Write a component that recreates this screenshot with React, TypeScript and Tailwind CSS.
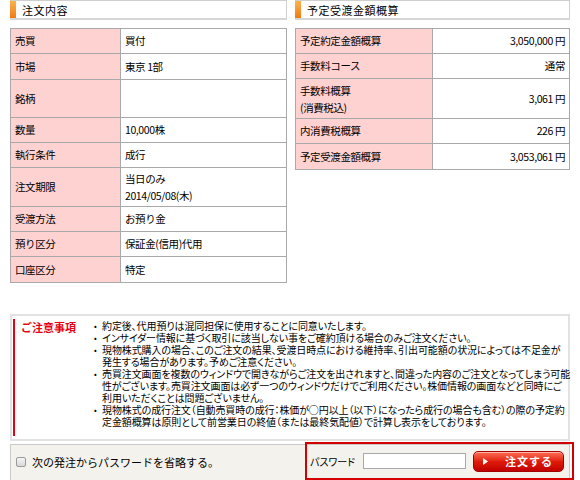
const labelTd = 'border border-[#a9a9a9] bg-[#ffd2d2] px-[4px] align-middle';
const valueTd = 'border border-[#a9a9a9] bg-white px-[4px] align-middle';

const SectionHeader = ({ title }: { title: string }) => (
  <div className="flex h-[20px] border border-l-0 border-[#cfcfcf] border-b-[2px] border-b-[#d6d6d6] bg-white">
    <div className="w-[6px] bg-gradient-to-b from-[#fbb24a] to-[#f07a0c]" />
    <div className="pl-[6px] text-[11px] leading-[18px] tracking-[0.5px]">{title}</div>
  </div>
);

const orderRows: { label: string; value: React.ReactNode; h: string }[] = [
  { label: '売買', value: '買付', h: 'h-[25px]' },
  { label: '市場', value: '東京 1部', h: 'h-[26px]' },
  { label: '銘柄', value: '', h: 'h-[38px]' },
  { label: '数量', value: '10,000株', h: 'h-[25px]' },
  { label: '執行条件', value: '成行', h: 'h-[25px]' },
  {
    label: '注文期限',
    value: (
      <div className="leading-[17px]">
        <div>当日のみ</div>
        <div>2014/05/08(木)</div>
      </div>
    ),
    h: 'h-[39px]',
  },
  { label: '受渡方法', value: 'お預り金', h: 'h-[25px]' },
  { label: '預り区分', value: '保証金(信用)代用', h: 'h-[25px]' },
  { label: '口座区分', value: '特定', h: 'h-[26px]' },
];

const estimateRows: { label: React.ReactNode; value: string; h: string }[] = [
  { label: '予定約定金額概算', value: '3,050,000 円', h: 'h-[25px]' },
  { label: '手数料コース', value: '通常', h: 'h-[25px]' },
  {
    label: (
      <div className="leading-[17px]">
        <div>手数料概算</div>
        <div>(消費税込)</div>
      </div>
    ),
    value: '3,061 円',
    h: 'h-[40px]',
  },
  { label: '内消費税概算', value: '226 円', h: 'h-[25px]' },
  { label: '予定受渡金額概算', value: '3,053,061 円', h: 'h-[26px]' },
];

const notes: string[][] = [
  ['約定後、代用預りは混同担保に使用することに同意いたします。'],
  ['インサイダー情報に基づく取引に該当しない事をご確約頂ける場合のみご注文ください。'],
  [
    '現物株式購入の場合、このご注文の結果、受渡日時点における維持率、引出可能額の状況によっては不足金が',
    '発生する場合があります。予めご注意ください。',
  ],
  [
    '売買注文画面を複数のウィンドウで開きながらご注文を出されますと、間違った内容のご注文となってしまう可能',
    '性がございます。売買注文画面は必ず一つのウィンドウだけでご利用ください。株価情報の画面などと同時にご',
    '利用いただくことは問題ございません。',
  ],
  [
    '現物株式の成行注文（自動売買時の成行：株価が○円以上（以下）になったら成行の場合も含む）の際の予定約',
    '定金額概算は原則として前営業日の終値（または最終気配値）で計算し表示をしております。',
  ],
];

const App = () => {
  return (
    <div className="w-[580px] h-[480px] overflow-hidden bg-white px-[10px] text-black font-['Noto_Sans_CJK_JP','Noto_Sans',sans-serif]">
      {/* Order summary + estimate */}
      <div className="flex items-start gap-[8px]">
        <div className="w-[277px]">
          <SectionHeader title="注文内容" />
          <table className="mt-[8px] w-full border-collapse text-[10.5px] tracking-[-0.4px]">
            <tbody>
              {orderRows.map((r) => (
                <tr key={r.label} className={r.h}>
                  <td className={`${labelTd} w-[110px]`}>{r.label}</td>
                  <td className={valueTd}>{r.value}</td>
                </tr>
              ))}
            </tbody>
          </table>
        </div>

        <div className="w-[275px]">
          <SectionHeader title="予定受渡金額概算" />
          <table className="mt-[8px] w-full border-collapse text-[10.5px] tracking-[-0.4px]">
            <tbody>
              {estimateRows.map((r, i) => (
                <tr key={i} className={r.h}>
                  <td className={`${labelTd} w-[137px]`}>{r.label}</td>
                  <td className={`${valueTd} text-right`}>{r.value}</td>
                </tr>
              ))}
            </tbody>
          </table>
        </div>
      </div>

      {/* Notice */}
      <div className="mt-[31px] h-[127px] border-[2px] border-[#e2e2e2] py-[3px] pl-[1px]">
        <div className="flex h-full border-l-[2px] border-[#e60012] pl-[6px] pt-[1px]">
          <div className="w-[72px] shrink-0 text-[11px] font-bold leading-[14px] text-[#e60012]">ご注意事項</div>
          <div className="text-[10px] leading-[12px] tracking-[-0.1px] [font-feature-settings:'palt']">
            {notes.map((lines, i) => (
              <div key={i} className="flex">
                <span className="w-[9px] shrink-0 pl-[1px] text-[8px]">•</span>
                <div>
                  {lines.map((l) => (
                    <div key={l} className="whitespace-nowrap">{l}</div>
                  ))}
                </div>
              </div>
            ))}
          </div>
        </div>
      </div>

      {/* Password / submit bar */}
      <div className="mt-[3px] flex h-[40px] items-start justify-between border border-[#c9c9c9] bg-[#f4f2ec] pl-[5px]">
        <label className="mt-[9px] flex items-center gap-[6px] text-[11px]">
          <span className="h-[10px] w-[10px] rounded-[2px] border border-[#9a9a9a] bg-gradient-to-b from-[#f4f4f4] to-[#d8d8d8]" />
          次の発注からパスワードを省略する。
        </label>
        <div className="-mr-[5px] -mt-[3px] flex h-[38px] w-[269px] items-center border-[2px] border-[#d40000] pl-[3px]">
          <span className="text-[10px] [font-feature-settings:'palt']">パスワード</span>
          <input className="ml-[8px] h-[16px] w-[103px] border border-[#a8a8a8] bg-white" />
          <button className="ml-[7px] flex h-[21px] w-[91px] items-center rounded-[5px] border border-[#a30000] bg-gradient-to-b from-[#ff6a50] via-[#e01a0a] to-[#c00000] pl-[9px] text-white shadow-[inset_0_1px_0_rgba(255,255,255,0.5)]">
            <svg width="5" height="7" viewBox="0 0 5 7">
              <path d="M0 0 L5 3.5 L0 7 Z" fill="#fff" />
            </svg>
            <span className="ml-[17px] text-[11px] font-bold tracking-[1px]">注文する</span>
          </button>
        </div>
      </div>
    </div>
  );
};

export default App;
